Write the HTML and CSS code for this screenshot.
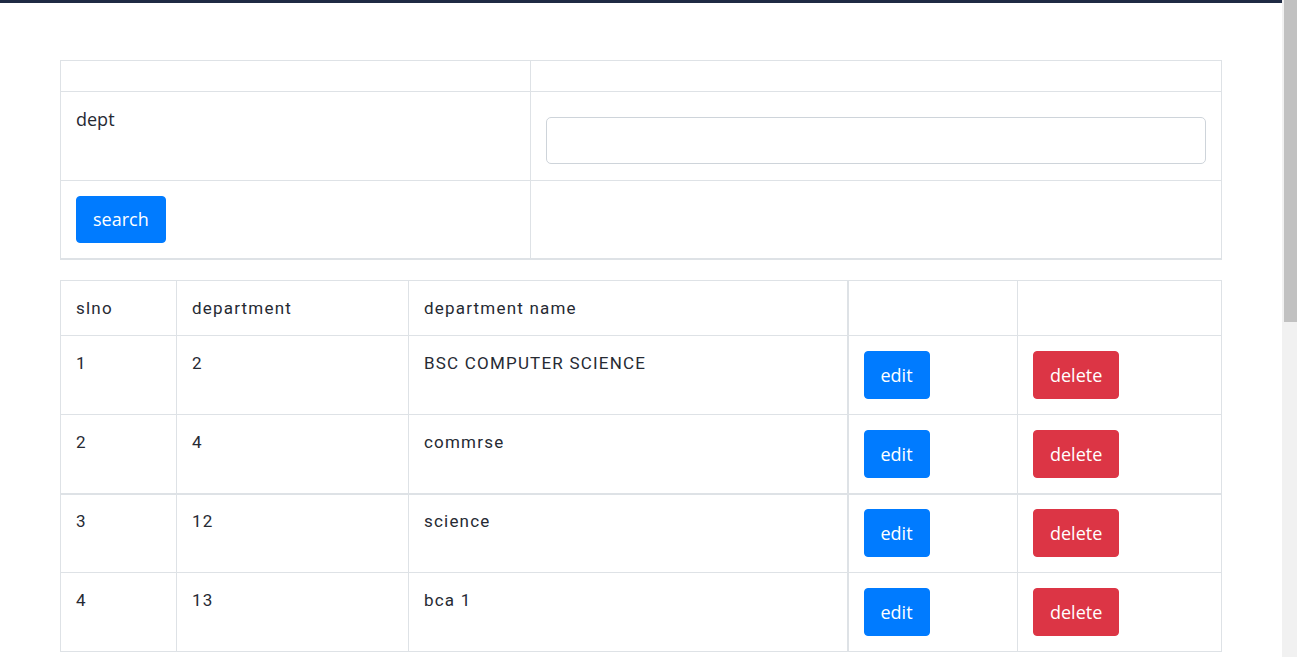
FILE: index.html
```html
<!DOCTYPE html>
<html>
<head>
<meta charset="utf-8">
<title>Department</title>
<link rel="stylesheet" href="styles.css">
</head>
<body>
<div class="topbar"></div>
<main class="page">
  <form class="search-form">
    <table class="grid form-grid">
      <colgroup><col class="fcol-label"><col></colgroup>
      <tbody>
        <tr class="empty-row"><td></td><td></td></tr>
        <tr class="field-row">
          <td><span class="label">dept</span></td>
          <td><input type="text" class="field"></td>
        </tr>
        <tr class="last-row">
          <td><button type="button" class="btn btn-blue">search</button></td>
          <td></td>
        </tr>
      </tbody>
    </table>
  </form>

  <table class="grid list-grid">
    <colgroup>
      <col class="c1"><col class="c2"><col class="c3"><col class="c4"><col class="c5">
    </colgroup>
    <tbody>
      <tr>
        <td>slno</td><td>department</td><td>department name</td><td class="split"></td><td></td>
      </tr>
      <tr>
        <td>1</td><td>2</td><td>BSC COMPUTER SCIENCE</td>
        <td class="split"><button type="button" class="btn btn-blue">edit</button></td>
        <td><button type="button" class="btn btn-red">delete</button></td>
      </tr>
      <tr>
        <td>2</td><td>4</td><td>commrse</td>
        <td class="split"><button type="button" class="btn btn-blue">edit</button></td>
        <td><button type="button" class="btn btn-red">delete</button></td>
      </tr>
    </tbody>
    <tbody class="second">
      <tr>
        <td>3</td><td>12</td><td>science</td>
        <td class="split"><button type="button" class="btn btn-blue">edit</button></td>
        <td><button type="button" class="btn btn-red">delete</button></td>
      </tr>
      <tr>
        <td>4</td><td>13</td><td>bca 1</td>
        <td class="split"><button type="button" class="btn btn-blue">edit</button></td>
        <td><button type="button" class="btn btn-red">delete</button></td>
      </tr>
    </tbody>
  </table>
</main>
<div class="scrollbar"><div class="scroll-thumb"></div></div>
</body>
</html>
```
FILE: styles.css
```css
html, body {
  margin: 0;
  padding: 0;
  background: #ffffff;
}

body {
  font-family: Roboto, "Liberation Sans", sans-serif;
  font-size: 17px;
  color: #262a33;
}

.topbar {
  height: 3px;
  background: #1f2a44;
}

.page {
  padding: 57px 75px 0 60px;
  min-height: 1300px;
}

.search-form {
  margin: 0;
}

.grid {
  width: 100%;
  border-collapse: collapse;
  table-layout: fixed;
}

.grid td {
  border: 1px solid #dee2e6;
  padding: 15px;
  vertical-align: top;
  line-height: 24px;
  letter-spacing: 1.2px;
}

.form-grid {
  margin-bottom: 20px;
}

.fcol-label {
  width: 470px;
}

.form-grid .empty-row td {
  padding: 15px;
  height: 0;
  line-height: 0;
}

.form-grid .field-row td {
  padding-bottom: 16px;
}

.form-grid .last-row td {
  border-bottom: 2px solid #dee2e6;
}

.label {
  font-family: "Open Sans", sans-serif;
  font-size: 18px;
  letter-spacing: 0;
  color: #262a33;
}

.field {
  display: block;
  box-sizing: border-box;
  width: 100%;
  height: 47px;
  margin-top: 10px;
  border: 1px solid #ced4da;
  border-radius: 5px;
  background: #fff;
  font-size: 16px;
  padding: 6px 12px;
}

.btn {
  display: inline-block;
  box-sizing: border-box;
  height: 47px;
  font-family: "Open Sans", sans-serif;
  font-size: 18px;
  line-height: 27px;
  padding: 9px 16px;
  border: 1px solid transparent;
  border-radius: 4px;
  color: #fff;
  letter-spacing: 0;
  cursor: pointer;
}

.list-grid .btn {
  height: 48px;
}

.btn-blue {
  background: #007bff;
  border-color: #007bff;
}

.btn-red {
  background: #dc3545;
  border-color: #dc3545;
}

.c1 { width: 116px; }
.c2 { width: 232px; }
.c3 { width: 439px; }
.c4 { width: 170px; }

.list-grid td.split {
  border-left: 2px solid #dee2e6;
}

.list-grid tbody.second tr:first-child td {
  box-shadow: inset 0 1px 0 #dee2e6;
}

.scrollbar {
  position: fixed;
  top: 0;
  right: 0;
  width: 15px;
  height: 100vh;
  background: #f1f1f1;
}

.scroll-thumb {
  margin-left: 2px;
  height: 322px;
  background: #c1c1c1;
}
```
